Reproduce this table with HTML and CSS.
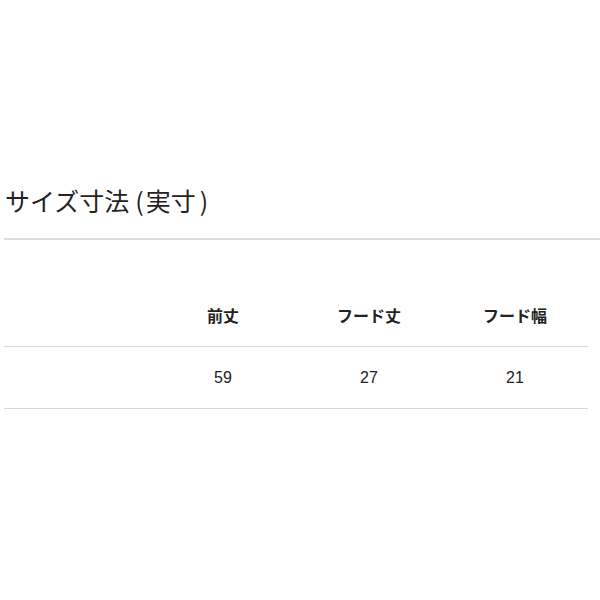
FILE: index.html
```html
<!DOCTYPE html>
<html lang="ja">
<head>
<meta charset="utf-8">
<link rel="stylesheet" href="styles.css">
</head>
<body>
<div class="page">
  <h2 class="title">サイズ寸法<span class="paren-open">(</span>実寸<span class="paren-close">)</span></h2>
  <table class="size-table">
    <thead>
      <tr><th></th><th>前丈</th><th>フード丈</th><th>フード幅</th></tr>
    </thead>
    <tbody>
      <tr><td></td><td>59</td><td>27</td><td>21</td></tr>
    </tbody>
  </table>
</div>
</body>
</html>
```
FILE: styles.css
```css
html, body {
  margin: 0;
  padding: 0;
  background: #fff;
}
.page {
  padding: 177px 0 0 4px;
  font-family: "Noto Sans CJK JP", "Liberation Sans", sans-serif;
  color: #222;
}
.title {
  margin: 0;
  padding: 0 0 15px 1px;
  font-size: 25px;
  font-weight: 400;
  line-height: 46px;
  border-bottom: 2px solid #dedede;
}
.paren-open {
  margin: 0 2px 0 6px;
}
.paren-close {
  margin-left: 4px;
}
.size-table {
  margin-top: 44px;
  width: 584px;
  border-collapse: collapse;
  table-layout: fixed;
}
.size-table th,
.size-table td {
  width: 146px;
  text-align: center;
  padding: 0;
  height: 61px;
  font-size: 16px;
}
.size-table th {
  font-weight: 700;
  border-bottom: 1px solid #d6d6d6;
  vertical-align: middle;
  height: 62px;
}
.size-table td {
  font-family: "Liberation Sans", sans-serif;
  border-bottom: 1px solid #d6d6d6;
}
```
